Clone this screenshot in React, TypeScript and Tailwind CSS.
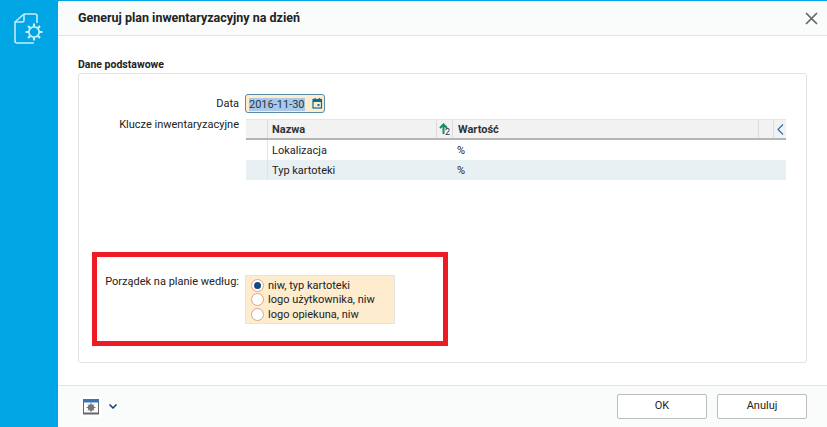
import React from "react";

function Radio({ on, label }: { on?: boolean; label: string }) {
  return (
    <div className="flex h-[14.5px] items-center">
      <span className="ml-[5px] flex h-[13px] w-[13px] items-center justify-center rounded-full border border-[#d9a58c] bg-white">
        {on && <span className="h-[7px] w-[7px] rounded-full bg-[#0f4a80]" />}
      </span>
      <span className="ml-[4px] text-[11px] leading-none text-[#222]">{label}</span>
    </div>
  );
}

function Row({ name, alt }: { name: string; alt?: boolean }) {
  return (
    <div className={`flex h-5 items-center text-[11px] text-[#222] ${alt ? "bg-[#e9f0f4]" : "bg-white"}`}>
      <div className="h-full w-[22px] border-r border-[#dbe4ee]" />
      <div className="w-[189px] pl-[4px] pt-[2px]">{name}</div>
      <div className="pt-[2px]">%</div>
    </div>
  );
}

export default function App() {
  return (
    <div className="flex h-[427px] w-[827px] overflow-hidden bg-[#00a5e3] pt-px font-['Roboto',sans-serif]">
      <div className="flex w-[58px] shrink-0 justify-center pt-[12px]">
        <svg width="30" height="32" viewBox="0 0 30 32" fill="none" stroke="#c4ecfa" strokeWidth="1.6">
          <path d="M10 1 H21 Q23 1 23 3 V10 M10 1 L1 9 V28 Q1 30 3 30 H20" strokeLinejoin="round" />
          <path d="M10 1 V7.5 Q10 9 8.5 9 H1" />
          <circle cx="20" cy="19" r="5.2" strokeWidth="1.8" />
          <path d="M20 10.5V14M20 24V27.5M11.5 19H15M25 19H28.5M14 13L16.4 15.4M23.6 22.6L26 25M14 25L16.4 22.6M23.6 15.4L26 13" strokeWidth="2.2" />
        </svg>
      </div>

      <div className="flex min-w-0 flex-1 flex-col overflow-hidden rounded-tl-[2px] bg-white">
        <div className="flex h-[35px] shrink-0 items-center justify-between border-b border-[#e3e5e5] bg-[#fafbfb] pl-[20px] pr-[9px]">
          <span className="text-[12.5px] font-bold text-[#222]">Generuj plan inwentaryzacyjny na dzień</span>
          <svg width="13" height="13" viewBox="0 0 13 13" stroke="#666" strokeWidth="1.7">
            <path d="M1 1L12 12M12 1L1 12" />
          </svg>
        </div>

        <div className="relative flex-1 px-[20px] pt-[21px]">
          <div className="h-[15px] text-[10.5px] font-bold leading-[15px] text-[#222]">Dane podstawowe</div>
          <div className="mt-px h-[290px] w-[729px] rounded-[3px] border border-[#e2e2e2] pt-[20px]">
            <div className="flex h-[19px] items-center">
              <div className="w-[160px] pt-px text-right text-[11px] text-[#222]">Data</div>
              <div className="ml-[6px] flex h-[19px] w-[80px] items-center rounded-[3px] border border-[#5a8ea8] bg-[#fdeccd] pl-[3px]">
                <span className="mt-px bg-[#a9c9e6] text-[11px] leading-[13px] text-[#1d3550]">2016-11-30</span>
                <svg width="11" height="11" viewBox="0 0 11 11" fill="none" stroke="#0d6a9c" className="ml-[7px]">
                  <rect x="1" y="1.5" width="8.5" height="8.5" strokeWidth="1.2" />
                  <path d="M1 3H9.5" strokeWidth="2" />
                  <path d="M3 0V1.5M7.5 0V1.5" strokeWidth="1.2" />
                  <rect x="5.5" y="6" width="2" height="2" fill="#0d6a9c" stroke="none" />
                </svg>
              </div>
            </div>

            <div className="mt-[6px] flex">
              <div className="-mt-px w-[160px] text-right text-[11px] leading-[13px] text-[#222]">Klucze inwentaryzacyjne</div>
              <div className="ml-[7px] w-[540px]">
                <div className="flex h-[21px] items-stretch border-b-2 border-t border-b-[#b5b5b5] border-t-[#e6e6e6] bg-[#f2f2f2] text-[11px] font-bold text-[#333]">
                  <div className="w-[22px] border-r border-[#dcdcdc]" />
                  <div className="flex w-[168px] items-center pl-[4px] pt-[2px]">Nazwa</div>
                  <div className="relative w-[17px] border-x border-[#dcdcdc]">
                    <svg width="11" height="12" viewBox="0 0 11 12" fill="none" className="absolute left-[2px] top-[3px]">
                      <path d="M4.5 11V1.5M1 5L4.5 1.5L8 5" stroke="#1c8a66" strokeWidth="2" />
                    </svg>
                    <span className="absolute bottom-px right-[2px] text-[9px] font-normal leading-none text-[#333]">2</span>
                  </div>
                  <div className="flex w-[305px] items-center pl-[5px] pt-[2px]">Wartość</div>
                  <div className="w-[15px] border-l border-[#dcdcdc]" />
                  <div className="flex flex-1 items-center justify-center border-l border-[#dcdcdc]">
                    <svg width="7" height="11" viewBox="0 0 7 11" fill="none" stroke="#2f6ea5" strokeWidth="1.2">
                      <path d="M6 0.5L1 5.5L6 10.5" />
                    </svg>
                  </div>
                </div>
                <Row name="Lokalizacja" />
                <Row name="Typ kartoteki" alt />
              </div>
            </div>

            <div className="mt-[95px] flex items-start">
              <div className="w-[160px] text-right text-[11px] leading-[13px] text-[#222]">Porządek na planie według:</div>
              <div className="ml-[6px] flex h-[49px] w-[150px] flex-col justify-center border border-[#e4e4e4] bg-[#fdeccd]">
                <Radio on label="niw, typ kartoteki" />
                <Radio label="logo użytkownika, niw" />
                <Radio label="logo opiekuna, niw" />
              </div>
            </div>
          </div>

          <div className="absolute left-[34px] top-[216px] h-[94px] w-[356px] border-[5px] border-[#ed1c24]" />
        </div>

        <div className="flex h-[42px] shrink-0 items-center justify-between border-t border-[#e3e5e5] bg-[#fafbfb] pl-[25px] pr-[20px]">
          <div className="flex items-center">
            <div className="-m-[3px] rounded-[3px] bg-white p-[3px]">
              <svg width="16" height="16" viewBox="0 0 16 16" fill="none" className="block">
                <rect x="0.5" y="1" width="15" height="14" fill="#fff" stroke="#666" />
                <rect x="0" y="0" width="16" height="3.5" fill="#3b74b5" />
                <rect x="0" y="13.5" width="16" height="1.5" fill="#666" />
                <circle cx="8" cy="8.5" r="3.2" fill="#777" />
                <path d="M8 4V13M3.5 8.5H12.5M5 5.5L11 11.5M11 5.5L5 11.5" stroke="#777" strokeWidth="1" />
              </svg>
            </div>
            <svg width="8" height="5" viewBox="0 0 8 5" fill="none" stroke="#123f73" strokeWidth="1.5" className="ml-[10px]">
              <path d="M0.5 0.5L4 4L7.5 0.5" />
            </svg>
          </div>
          <div className="flex gap-[10px]">
            <button className="h-[25px] w-[90px] rounded-[2px] border border-[#bdbdbd] bg-white text-[11px] text-[#222]">OK</button>
            <button className="h-[25px] w-[90px] rounded-[2px] border border-[#bdbdbd] bg-white text-[11px] text-[#222]">Anuluj</button>
          </div>
        </div>
      </div>
    </div>
  );
}
